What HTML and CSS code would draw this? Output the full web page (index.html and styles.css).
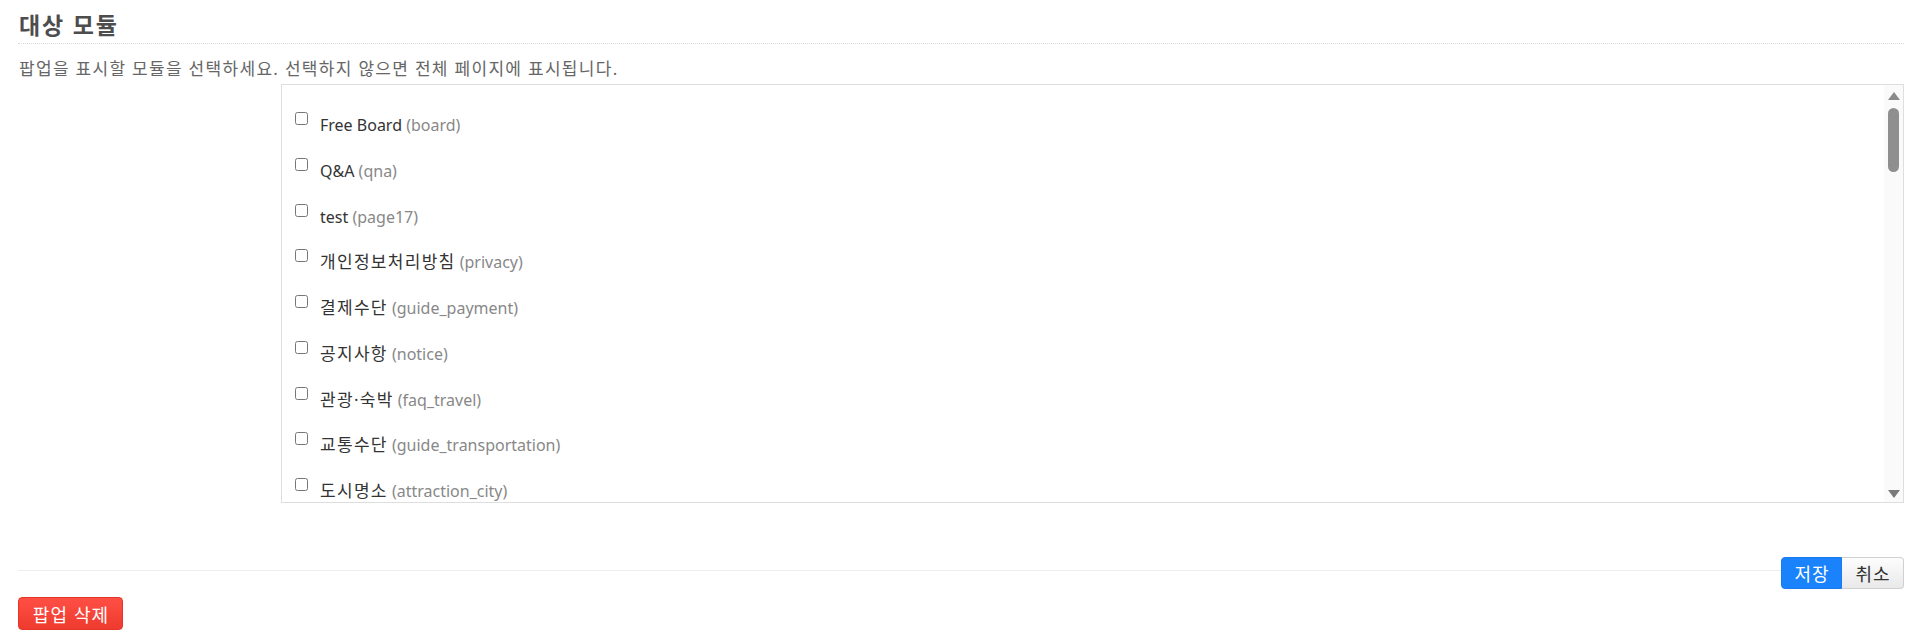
FILE: index.html
```html
<!DOCTYPE html>
<html lang="ko">
<head>
<meta charset="utf-8">
<title>대상 모듈</title>
<link rel="stylesheet" href="styles.css">
</head>
<body>
<div class="page">
  <section class="section">
    <h2 class="section-title">대상 모듈</h2>
    <p class="section-desc">팝업을 표시할 모듈을 선택하세요. 선택하지 않으면 전체 페이지에 표시됩니다.</p>
    <div class="field">
      <div class="field-label"></div>
      <div class="module-box">
        <ul class="module-list">
          <li class="module-item"><input type="checkbox" class="module-check"><span class="module-name"><span class="module-title" lang="en">Free Board</span> <span class="module-id" lang="en">(board)</span></span></li>
          <li class="module-item"><input type="checkbox" class="module-check"><span class="module-name"><span class="module-title" lang="en">Q&amp;A</span> <span class="module-id" lang="en">(qna)</span></span></li>
          <li class="module-item"><input type="checkbox" class="module-check"><span class="module-name"><span class="module-title" lang="en">test</span> <span class="module-id" lang="en">(page17)</span></span></li>
          <li class="module-item"><input type="checkbox" class="module-check"><span class="module-name"><span class="module-title">개인정보처리방침</span> <span class="module-id" lang="en">(privacy)</span></span></li>
          <li class="module-item"><input type="checkbox" class="module-check"><span class="module-name"><span class="module-title">결제수단</span> <span class="module-id" lang="en">(guide_payment)</span></span></li>
          <li class="module-item"><input type="checkbox" class="module-check"><span class="module-name"><span class="module-title">공지사항</span> <span class="module-id" lang="en">(notice)</span></span></li>
          <li class="module-item"><input type="checkbox" class="module-check"><span class="module-name"><span class="module-title">관광·숙박</span> <span class="module-id" lang="en">(faq_travel)</span></span></li>
          <li class="module-item"><input type="checkbox" class="module-check"><span class="module-name"><span class="module-title">교통수단</span> <span class="module-id" lang="en">(guide_transportation)</span></span></li>
          <li class="module-item"><input type="checkbox" class="module-check"><span class="module-name"><span class="module-title">도시명소</span> <span class="module-id" lang="en">(attraction_city)</span></span></li>
        </ul>
        <div class="scrollbar" aria-hidden="true">
          <span class="scroll-arrow scroll-up"></span>
          <span class="scroll-track"><span class="scroll-thumb"></span></span>
          <span class="scroll-arrow scroll-down"></span>
        </div>
      </div>
    </div>
  </section>

  <div class="actions">
    <div class="actions-rule"></div>
    <div class="btn-group">
      <button type="button" class="btn btn-primary">저장</button>
      <button type="button" class="btn btn-default">취소</button>
    </div>
  </div>

  <div class="danger-zone">
    <button type="button" class="btn btn-danger">팝업 삭제</button>
  </div>
</div>
</body>
</html>
```

FILE: styles.css
```css
* { box-sizing: border-box; }

html, body {
  margin: 0;
  padding: 0;
  background: #fff;
}

body {
  font-family: "Noto Sans", "Noto Sans CJK KR", sans-serif;
  color: #333;
}

.page {
  padding: 0 16px 0 18px;
}

.section-title {
  margin: 0;
  padding: 10px 0 3px 1px;
  font-size: 23px;
  line-height: 30px;
  font-weight: 700;
  letter-spacing: 1.8px;
  color: #4d4d4d;
  border-bottom: 1px dotted #d8d8d8;
}

.section-desc {
  margin: 13px 0 3px 1px;
  font-size: 17px;
  line-height: 24px;
  color: #666;
  letter-spacing: 1.3px;
}

.field {
  display: flex;
}

.field-label {
  width: 263px;
  flex: none;
}

.module-box {
  position: relative;
  flex: 1;
  height: 419px;
  border: 1px solid #dedede;
  overflow: hidden;
}

.module-list {
  list-style: none;
  margin: 0;
  padding: 19px 0 0 13px;
  display: grid;
  grid-auto-rows: 45.75px;
}

.module-item {
  display: flex;
  align-items: flex-start;
  gap: 12px;
}

.module-check {
  margin: 8px 0 0 0;
  width: 13px;
  height: 13px;
  flex: none;
}

.module-name {
  padding-top: 10px;
  font-size: 16px;
  line-height: 22px;
  color: #333;
}

.module-title {
  font-size: 17px;
  letter-spacing: 1.3px;
}

.module-title:lang(en) {
  font-size: 16px;
  letter-spacing: 0;
}

.module-id {
  color: #888;
  font-size: 16px;
}

.scrollbar {
  position: absolute;
  top: 0;
  right: 0;
  bottom: 0;
  width: 19px;
  background: #fafafa;
  display: flex;
  flex-direction: column;
  align-items: center;
}

.scroll-arrow {
  width: 0;
  height: 0;
  border-left: 6.5px solid transparent;
  border-right: 6.5px solid transparent;
  flex: none;
}

.scroll-up {
  margin-top: 7px;
  border-bottom: 8px solid #8a8a8a;
}

.scroll-down {
  margin-bottom: 4px;
  border-top: 8px solid #7a7a7a;
}

.scroll-track {
  flex: 1;
  width: 100%;
  display: flex;
  justify-content: center;
  padding-top: 8px;
}

.scroll-thumb {
  width: 11px;
  height: 64px;
  border-radius: 6px;
  background: #8f8f8f;
}

.actions {
  display: flex;
  margin-top: 54px;
}

.actions-rule {
  flex: 1;
  height: 1px;
  margin-top: 13px;
  background: #eeeeee;
}

.btn-group {
  display: flex;
}

.btn {
  font-family: "Noto Sans CJK KR", "Noto Sans", sans-serif;
  font-size: 18px;
  line-height: 22px;
  letter-spacing: 1px;
  border: 1px solid transparent;
  cursor: pointer;
  margin: 0;
}

.btn-primary {
  width: 61px;
  height: 32px;
  padding: 0 0 0 1px;
  color: #fff;
  background: #1a82fb;
  border-color: #1a7bf0;
  border-radius: 4px 0 0 4px;
}

.btn-default {
  width: 62px;
  height: 32px;
  padding: 0 0 0 1px;
  color: #333;
  background: linear-gradient(#fdfdfd, #e9e9e9);
  border-color: #d0d0d0;
  border-left: 0;
  border-radius: 0 4px 4px 0;
}

.danger-zone {
  margin-top: 8px;
}

.btn-danger {
  width: 105px;
  height: 33px;
  padding: 0 0 0 1px;
  color: #fff;
  background: linear-gradient(#ff4f44, #ee3a2f);
  border-color: #e3362b;
  border-radius: 4px;
}
```
